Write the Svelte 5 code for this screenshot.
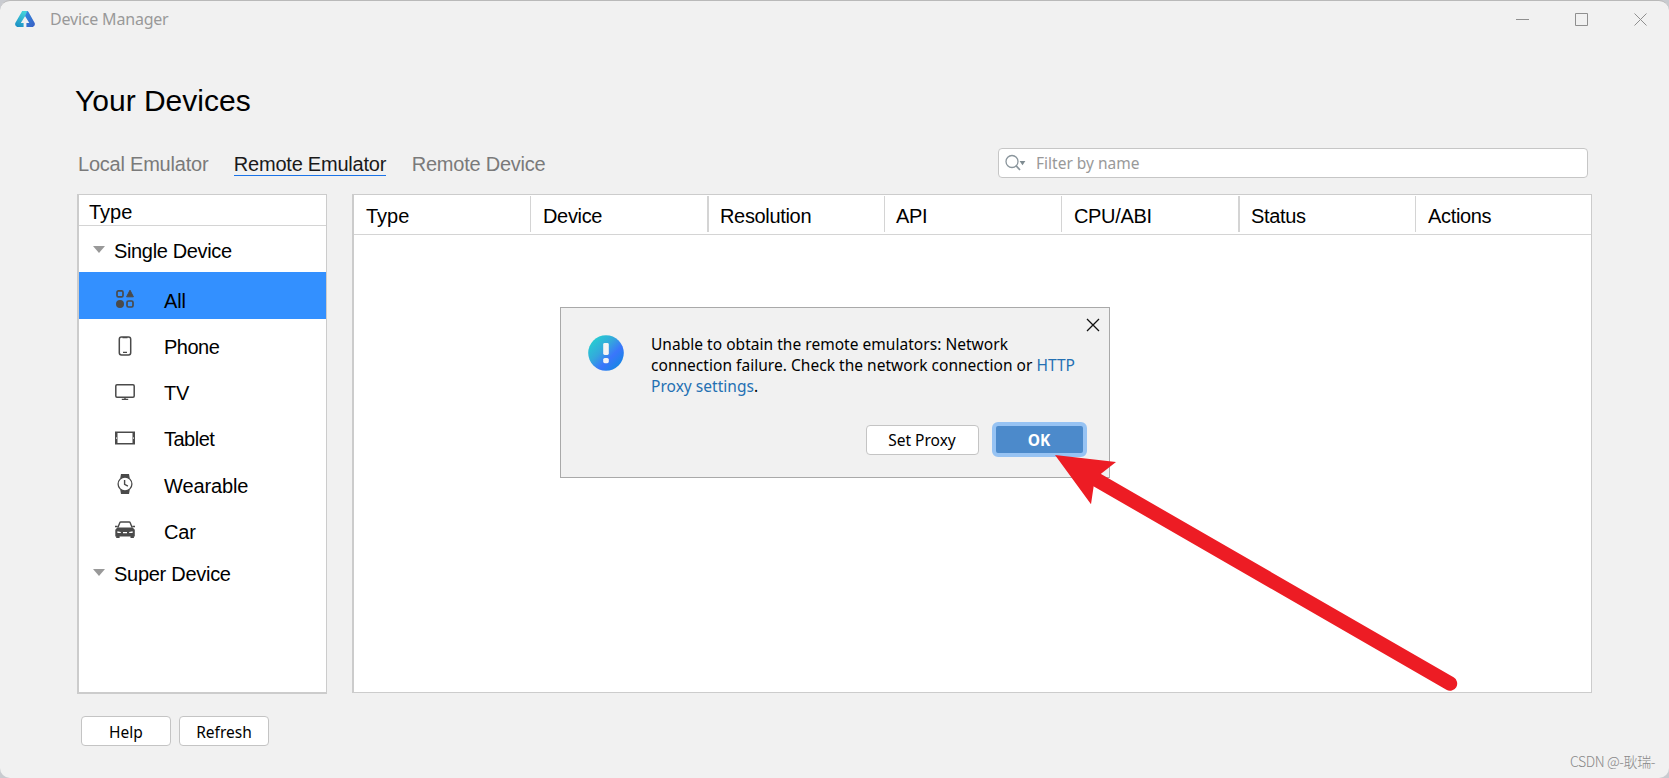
<script>
	let active = 'Remote Emulator';
	let selected = 'All';
	let filter = '';
	let dialogOpen = true;

	const tabs = ['Local Emulator', 'Remote Emulator', 'Remote Device'];
	const types = ['All', 'Phone', 'TV', 'Tablet', 'Wearable', 'Car'];
	const columns = ['Type', 'Device', 'Resolution', 'API', 'CPU/ABI', 'Status', 'Actions'];
</script>

<div class="window">
	<div class="strip">
		<i class="s1"></i><i class="s2"></i><i class="s3"></i><i class="s4"></i><i class="s5"></i>
	</div>
	<header class="titlebar">
		<svg class="logo" width="20" height="16" viewBox="0 0 20 16">
			<defs>
				<linearGradient id="lg1" x1="0.6" y1="0" x2="0.2" y2="1">
					<stop offset="0" stop-color="#45d3da" />
					<stop offset="1" stop-color="#1b8fc4" />
				</linearGradient>
				<linearGradient id="lg2" x1="0" y1="0" x2="1" y2="1">
					<stop offset="0" stop-color="#2f8be0" />
					<stop offset="1" stop-color="#3a5fc4" />
				</linearGradient>
			</defs>
			<path d="M7.2 0h5.4L10.2 5 5.8 12H8.6v4H2.2Q-.6 15 .3 12z" fill="url(#lg1)" />
			<path d="M12.2 0q.8 0 1.3.9L19.7 12q.9 3-1.9 4h-6.4v-4h2.9L10 5z" fill="url(#lg2)" />
		</svg>
		<span class="title">Device Manager</span>
		<div class="controls">
			<svg width="13" height="13" viewBox="0 0 13 13"><path d="M0 6.5h13" /></svg>
			<svg width="13" height="13" viewBox="0 0 13 13"><path d="M.5.5h12v12H.5z" /></svg>
			<svg width="13" height="13" viewBox="0 0 13 13"><path d="M.5.5l12 12M12.5.5l-12 12" /></svg>
		</div>
	</header>

	<h1>Your Devices</h1>

	<div class="toolbar">
		<nav>
			{#each tabs as tab}
				<button class="tab" class:active={tab === active} on:click={() => (active = tab)}>{tab}</button>
			{/each}
		</nav>
		<label class="search">
			<svg width="21" height="18" viewBox="0 0 21 18">
				<circle cx="7" cy="7.5" r="6" fill="none" stroke="#8a959c" stroke-width="1.3" />
				<path d="M11 11.7l4 4.3" stroke="#8a959c" stroke-width="1.7" />
				<path d="M14.6 7h5.8l-2.9 4.2z" fill="#7f8b91" />
			</svg>
			<input type="text" placeholder="Filter by name" bind:value={filter} />
		</label>
	</div>

	<main>
		<aside>
			<div class="aside-head">Type</div>
			<div class="group"><i class="caret"></i>Single Device</div>
			{#each types as type}
				<button class="row" class:selected={type === selected} on:click={() => (selected = type)}>
					<svg width="20" height="20" viewBox="0 0 20 20" fill="none" stroke="#4a4a4a" stroke-width="1.7">
						{#if type === 'All'}
							<rect x="2" y="1.9" width="6" height="6" rx="1.4" />
							<path d="M15 1.2l3.4 6.6h-6.8z" fill="#4a4a4a" stroke-width="1" stroke-linejoin="round" />
							<circle cx="5" cy="15" r="4" fill="#4a4a4a" stroke="none" />
							<rect x="12" y="12" width="6" height="6" rx="1.4" />
						{:else if type === 'Phone'}
							<rect x="4.3" y="1" width="11.4" height="18" rx="2.2" stroke-width="1.5" />
							<path d="M7.5 1.7h5M8 16.3h4" stroke-width="1.3" />
						{:else if type === 'TV'}
							<rect x=".8" y="2.8" width="18.4" height="12.4" rx="1.2" stroke-width="1.5" />
							<path d="M10 15v2M6.8 17.4h6.4" stroke-width="1.4" />
						{:else if type === 'Tablet'}
							<path d="M0 3.5h20v13H0z" fill="#4a4a4a" stroke="none" />
							<path d="M2.5 5h15v10h-15z" fill="#fff" stroke="none" />
							<path d="M1 9.2h.7v1.8H1zM18.3 9.2h.7v1.8h-.7z" fill="#fff" stroke="none" />
						{:else if type === 'Wearable'}
							<path d="M6 0h8l.8 4.5H5.2zM5.2 15.5h9.6L14 20H6z" fill="#4a4a4a" stroke="none" />
							<circle cx="10" cy="10" r="6.9" fill="#fff" stroke-width="1.3" />
							<path d="M9.6 6v4.3l3.3 1.8" stroke-width="1.4" />
						{:else}
							<path d="M2.9 7.6l1.9-4.9q.3-.7 1-.7h8.4q.7 0 1 .7l1.9 4.9" stroke-width="1.4" />
							<path d="M0 5.8h2.7v1.5H0zM17.3 5.8H20v1.5h-2.7z" fill="#4a4a4a" stroke="none" />
							<path d="M2.4 7.4h15.2l2.2 2.3v6.8h-.9v1.6h-3.4v-1.6H4.6v1.6H1.2v-1.6H.3V9.7z" fill="#4a4a4a" stroke="none" />
							<path d="M2.4 11.3l3.4.6v1.2H2.4zM17.6 11.3l-3.4.6v1.2h3.4zM8 11.9h4v1.3H8z" fill="#fff" stroke="none" />
						{/if}
					</svg>
					<span>{type}</span>
				</button>
			{/each}
			<div class="group last"><i class="caret"></i>Super Device</div>
		</aside>

		<section class="table">
			<div class="thead">
				{#each columns as column}
					<div class="th">{column}</div>
				{/each}
			</div>
		</section>
	</main>

	<footer>
		<button class="btn">Help</button>
		<button class="btn">Refresh</button>
	</footer>

	{#if dialogOpen}
		<div class="dialog" role="dialog" aria-label="Network connection failure">
			<svg class="info" width="36" height="36" viewBox="0 0 36 36">
				<defs>
					<linearGradient id="info" x1="0.1" y1="0.1" x2="0.9" y2="0.9">
						<stop offset="0" stop-color="#25d0d0" />
						<stop offset=".38" stop-color="#34a8dc" />
						<stop offset=".66" stop-color="#3a76fb" />
						<stop offset="1" stop-color="#1288e2" />
					</linearGradient>
				</defs>
				<circle cx="18" cy="18" r="17.8" fill="url(#info)" />
				<rect x="15.2" y="8" width="5.6" height="12" rx="1.4" fill="#f4f4f4" />
				<rect x="15.2" y="23" width="5.6" height="5.2" rx="1.6" fill="#f4f4f4" />
			</svg>
			<div class="content">
				<p>
					Unable to obtain the remote emulators: Network<br />
					connection failure. Check the network connection or <a href="#proxy">HTTP</a><br />
					<a href="#proxy">Proxy settings</a>.
				</p>
				<div class="actions">
					<button class="btn proxy">Set Proxy</button>
					<button class="btn ok" on:click={() => (dialogOpen = false)}>OK</button>
				</div>
			</div>
			<button class="close" aria-label="Close" on:click={() => (dialogOpen = false)}>
				<svg width="14" height="14" viewBox="0 0 14 14"><path d="M1 1l12 12M13 1L1 13" stroke="#111" stroke-width="1.3" /></svg>
			</button>
		</div>
	{/if}

	<svg class="arrow" width="410" height="250" viewBox="1050 450 410 250">
		<path d="M1097 480L1450 683.6" stroke="#ed1c24" stroke-width="14.4" stroke-linecap="round" />
		<path d="M1055 455l61 7-15 11.8-7.3 12.2-2.7 18.3z" fill="#ed1c24" />
	</svg>

	<div class="watermark">CSDN @-耿瑞-</div>
</div>

<style>
	:global(body) {
		background: #c9cbd0;
		overflow: hidden;
	}

	.window {
		position: relative;
		box-sizing: border-box;
		width: 1669px;
		height: 778px;
		display: flex;
		flex-direction: column;
		overflow: hidden;
		border-top: 1px solid #b9b9b9;
		border-radius: 10px;
		background: #f1f1f1;
		color: #000;
		font-family: 'Liberation Sans', Arial, sans-serif;
		font-size: 20px;
	}

	button {
		border: none;
		background: none;
		padding: 0;
		color: inherit;
		font: inherit;
	}

	/* slivers of the window behind, along the top edge */
	.strip i {
		position: absolute;
		top: -1px;
		width: 2px;
		height: 1px;
		background: #4a90c0;
	}

	.strip .s1 { left: 87px; }
	.strip .s2 { left: 198px; background: #4aa88a; }
	.strip .s3 { left: 300px; background: #3aa0b8; }
	.strip .s4 { left: 469px; width: 18px; background: #379a94; }
	.strip .s5 { left: 558px; width: 20px; background: #46874a; }

	.titlebar {
		display: flex;
		align-items: center;
		height: 36px;
		padding: 0 22px 0 15px;
		color: #999;
		font-family: 'Noto Sans', sans-serif;
		font-size: 16px;
	}

	.title {
		margin-left: 15px;
		letter-spacing: -0.2px;
	}

	.controls {
		display: flex;
		gap: 46px;
		margin-left: auto;
	}

	.controls path {
		fill: none;
		stroke: #8f8f8f;
	}

	h1 {
		margin: 46px 0 0 75px;
		font-size: 30px;
		font-weight: 400;
		line-height: 36px;
	}

	.toolbar {
		display: flex;
		justify-content: space-between;
		align-items: flex-start;
		height: 46px;
		margin: 29px 81px 0 78px;
	}

	nav {
		display: flex;
		gap: 25.5px;
		padding-top: 5px;
	}

	.tab {
		border-bottom: 1px solid transparent;
		color: #7a7a7a;
		letter-spacing: -0.22px;
		line-height: 22px;
		white-space: nowrap;
	}

	.tab.active {
		border-color: #1a73e8;
		color: #1a1a1a;
	}

	.search {
		display: flex;
		align-items: center;
		box-sizing: border-box;
		width: 590px;
		height: 30px;
		padding-left: 6px;
		border: 1px solid #c6c6c6;
		border-radius: 4px;
		background: #fff;
	}

	.search input {
		flex: 1;
		margin-left: 10px;
		padding: 0;
		border: none;
		outline: none;
		background: none;
		font-family: 'Noto Sans', sans-serif;
		font-size: 15.5px;
	}

	.search input::placeholder {
		color: #999;
	}

	main {
		display: flex;
		align-items: flex-start;
		gap: 25px;
		height: 500px;
		padding: 0 77px;
	}

	aside {
		box-sizing: border-box;
		width: 250px;
		height: 500px;
		border: 1px solid #ccc;
		border-width: 1px 1px 2px 2px;
		background: #fff;
	}

	.aside-head {
		height: 30px;
		padding-left: 10px;
		border-bottom: 1px solid #d4d4d4;
		line-height: 34px;
	}

	.group {
		display: flex;
		align-items: center;
		box-sizing: border-box;
		height: 46px;
		padding: 4px 0 0 14px;
		letter-spacing: -0.35px;
	}

	.group.last {
		letter-spacing: -0.28px;
	}

	.caret {
		margin: -4px 9px 0 0;
		border: 6px solid transparent;
		border-top: 7px solid #999;
		border-bottom: 0;
	}

	.row {
		display: flex;
		align-items: center;
		box-sizing: border-box;
		width: 100%;
		height: 46.2px;
		padding: 11px 0 0 36px;
	}

	.row svg {
		margin-bottom: 4px;
	}

	.row span {
		margin-left: 29px;
		letter-spacing: -0.12px;
	}

	.row:nth-child(4) span,
	.row:nth-child(6) span {
		letter-spacing: -0.5px;
	}

	.row.selected {
		height: 47px;
		background: #3390ff;
	}

	.table {
		flex: 1;
		box-sizing: border-box;
		height: 499px;
		border: 1px solid #ccc;
		border-left-width: 2px;
		background: #fff;
	}

	.thead {
		display: grid;
		grid-template-columns: 176px repeat(5, 177px) 1fr;
		height: 39px;
		border-bottom: 1px solid #d4d4d4;
	}

	.th {
		height: 36px;
		margin-top: 1px;
		padding-left: 12px;
		border-left: 1px solid #d4d4d4;
		letter-spacing: -0.33px;
		line-height: 40px;
	}

	.th:nth-child(3),
	.th:nth-child(6) {
		padding-left: 11px;
		border-left-width: 2px;
	}

	.th:nth-child(4) {
		padding-left: 11px;
	}

	.th:first-child {
		border-left: none;
		letter-spacing: 0;
	}

	footer {
		display: flex;
		gap: 8px;
		padding: 22px 81px 0;
	}

	.btn {
		box-sizing: border-box;
		width: 90px;
		height: 30px;
		padding-top: 1px;
		border: 1px solid #c4c4c4;
		border-radius: 4px;
		background: #fff;
		font-family: 'Noto Sans', sans-serif;
		font-size: 15.5px;
	}

	.dialog {
		position: absolute;
		left: 560px;
		top: 306px;
		display: flex;
		box-sizing: border-box;
		width: 550px;
		height: 171px;
		padding: 26px 0 0 27px;
		border: 1px solid #a9a9a9;
		background: #f1f1f1;
		font-family: 'Noto Sans', sans-serif;
		font-size: 15.5px;
	}

	.info {
		flex: none;
		margin-top: 1px;
	}

	.content {
		margin-left: 27px;
	}

	.dialog p {
		margin: 0 0 25px;
		letter-spacing: 0.03px;
		line-height: 21px;
		white-space: nowrap;
	}

	.dialog a {
		color: #2470b3;
		text-decoration: none;
	}

	.actions {
		display: flex;
		align-items: center;
		gap: 13px;
		margin-left: 214.5px;
	}

	.btn.proxy {
		width: 113px;
	}

	.btn.ok {
		width: 95px;
		height: 35px;
		border: 4px solid #97c3f3;
		border-radius: 6px;
		background: #4c8acb;
		color: #fff;
		font-weight: 700;
	}

	.close {
		position: absolute;
		right: 9px;
		top: 10px;
		display: flex;
	}

	.arrow {
		position: absolute;
		left: 1050px;
		top: 449px;
		pointer-events: none;
	}

	.watermark {
		position: absolute;
		right: 14px;
		bottom: 7px;
		color: #888;
		font-family: 'Noto Sans CJK SC', sans-serif;
		font-size: 14px;
		font-weight: 300;
		letter-spacing: -0.4px;
		line-height: 20px;
	}
</style>
